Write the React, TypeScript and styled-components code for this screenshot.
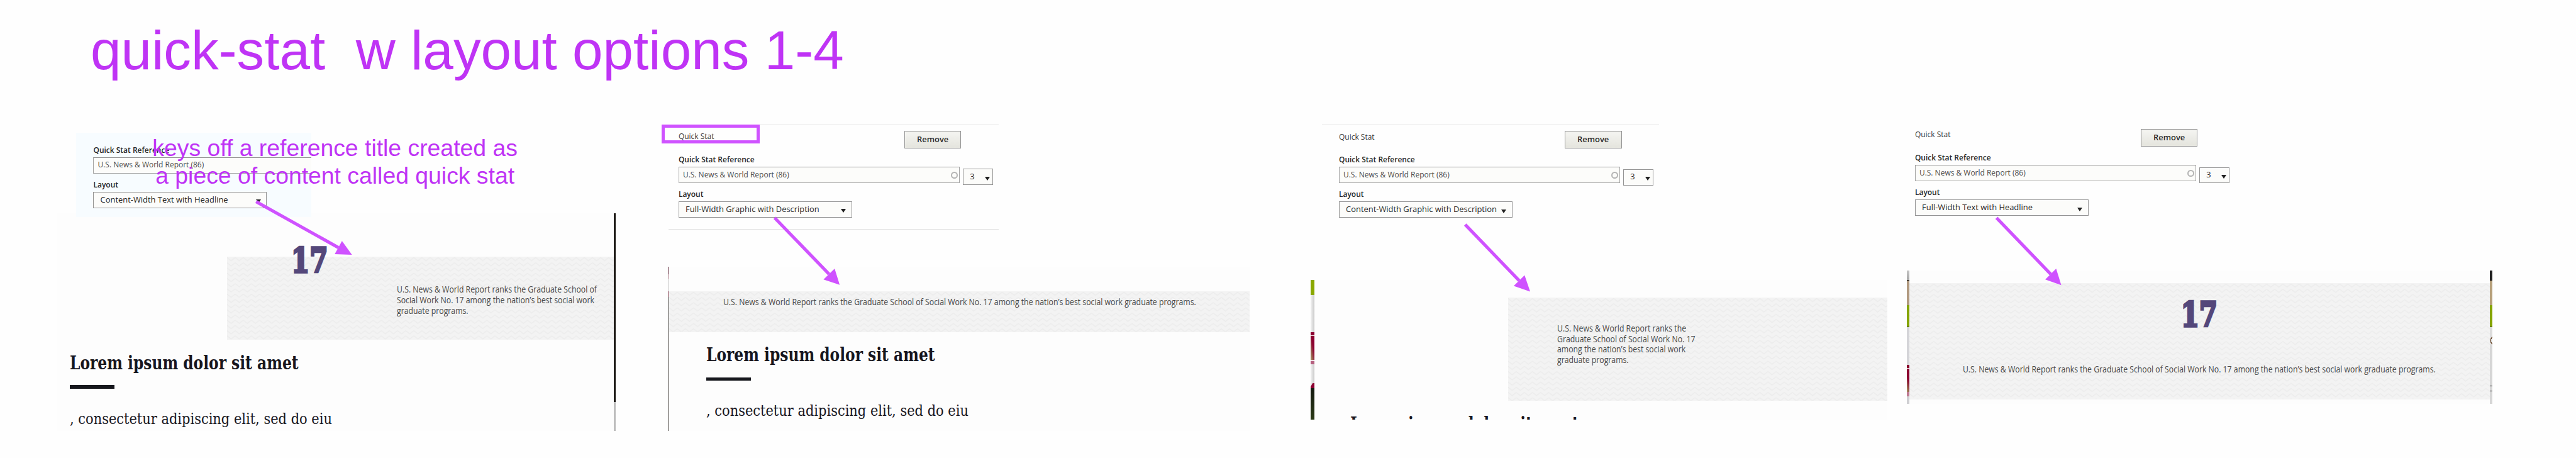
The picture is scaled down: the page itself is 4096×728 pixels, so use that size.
import React, { useId } from "react";
import styled, { createGlobalStyle } from "styled-components";

const GlobalStyle = createGlobalStyle`
  *, *::before, *::after { box-sizing: border-box; }
  html, body { margin: 0; padding: 0; background: #fefefe; overflow: hidden; }
`;

const sans = `"Open Sans", "Noto Sans", sans-serif`;
const slab = `"DejaVu Serif", "Noto Serif", serif`;
const note = `"Liberation Sans", Arial, sans-serif`;
const ink = "#bf33f5";
const marker = "#cf52ff";

/* ---------- board ---------- */

const Window = styled.main`
  width: 100vw;
  height: 100vh;
  overflow: hidden;
  background: #fefefe;
`;

const Board = styled.div`
  position: relative;
  width: 4440px;
  height: 789px;
  overflow: hidden;
  zoom: 0.922315;
`;

/* A clipping pinned somewhere on the board */
const Pinned = styled.div<{ $x: number; $y: number; $w: number; $h?: number }>`
  position: absolute;
  left: ${(p) => p.$x}px;
  top: ${(p) => p.$y}px;
  width: ${(p) => p.$w}px;
  height: ${(p) => (p.$h ? `${p.$h}px` : "auto")};
`;

const Title = styled.h1`
  position: absolute;
  left: 156px;
  top: 31px;
  margin: 0;
  font: 400 94.6px/110px ${note};
  color: ${ink};
  white-space: pre;
`;

const Note = styled.p`
  position: absolute;
  left: 227.5px;
  top: 230.4px;
  width: 700px;
  margin: 0;
  font: 400 40.5px/47.7px ${note};
  color: ${ink};
  text-align: center;
`;

const Highlight = styled.div`
  position: absolute;
  left: 1141px;
  top: 214.3px;
  width: 169px;
  height: 33.4px;
  border: 5.5px solid ${marker};
`;

const Arrows = styled.svg`
  position: absolute;
  inset: 0;
  width: 4440px;
  height: 789px;
  pointer-events: none;
`;

/* ---------- form ---------- */

const Form = styled.div<{ $left: number; $ruled?: "top" | "both" }>`
  display: flex;
  flex-direction: column;
  height: 182px;
  padding: 10.3px 0 0 ${(p) => p.$left}px;
  border-top: 1px solid ${(p) => (p.$ruled ? "#e2e2e2" : "transparent")};
  border-bottom: 1px solid ${(p) => (p.$ruled === "both" ? "#e2e2e2" : "transparent")};
  font: 400 14px/18px ${sans};
  color: #2a2a2a;
`;

const FormCard = styled.div`
  display: flex;
  flex-direction: column;
  height: 145.7px;
  padding: 21.7px 0 0 30px;
  background: #f7fcff;
  font: 400 14px/18px ${sans};
  color: #1c1c1c;
  overflow: hidden;
`;

const FormHead = styled.div`
  display: flex;
  justify-content: space-between;
  align-items: flex-start;
  width: 487.4px;
  height: 30px;
`;

const FormName = styled.span`
  padding-top: 1.2px;
  font-size: 13px;
  color: #3a3a3a;
`;

const Button = styled.button`
  width: 98.2px;
  height: 30px;
  padding: 0 0 2px;
  border: 1px solid #949494;
  border-radius: 0;
  background: linear-gradient(#f5f5f2, #e4e4dd);
  font: 600 14px/18px ${sans};
  color: #2a2a2a;
`;

const Label = styled.label<{ $gap: number }>`
  margin-top: ${(p) => p.$gap}px;
  margin-bottom: 2.8px;
  font-size: 13px;
  font-weight: 600;
  line-height: 18px;
  color: #262626;
`;

const FieldRow = styled.div`
  display: flex;
  align-items: flex-start;
  gap: 5px;
`;

const Input = styled.div<{ $open?: boolean }>`
  display: flex;
  justify-content: space-between;
  align-items: center;
  flex: none;
  width: ${(p) => (p.$open ? "100%" : "485.2px")};
  height: 28px;
  padding: 0 3px 0 6.5px;
  border: 1px solid #a4a4a4;
  border-right-width: ${(p) => (p.$open ? 0 : 1)}px;
  border-top-color: #929292;
  background: #fcfcfa;
  font-size: 13px;
  color: #4a4a4a;
`;

const Throbber = styled.i`
  width: 12px;
  height: 12px;
  margin-top: 1px;
  border: 2.2px solid #b4b4b4;
  border-radius: 50%;
`;

const SelectBox = styled.div<{ $w: number; $right: number; $drop?: number }>`
  display: flex;
  justify-content: space-between;
  align-items: flex-start;
  flex: none;
  width: ${(p) => p.$w}px;
  height: 28px;
  margin-top: ${(p) => p.$drop ?? 0}px;
  padding: 2.7px ${(p) => p.$right}px 0 11px;
  border: 1px solid #949494;
  background: #fcfcfa;
  white-space: nowrap;
`;

const Caret = styled.i`
  margin-top: 9.5px;
  border: 4.4px solid transparent;
  border-top: 6.6px solid #222;
  border-bottom: 0;
`;

function Select(props: { value: string; width: number; right: number; drop?: number }) {
  return (
    <SelectBox $w={props.width} $right={props.right} $drop={props.drop}>
      <span>{props.value}</span>
      <Caret />
    </SelectBox>
  );
}

function QuickStatForm(props: { layout: string; left: number; ruled?: "top" | "both" }) {
  return (
    <Form $left={props.left} $ruled={props.ruled}>
      <FormHead>
        <FormName>Quick Stat</FormName>
        <Button>Remove</Button>
      </FormHead>
      <Label $gap={10.9}>Quick Stat Reference</Label>
      <FieldRow>
        <Input>
          <span>U.S. News &amp; World Report (86)</span>
          <Throbber />
        </Input>
        <Select value="3" width={52} right={4.2} drop={3.7} />
      </FieldRow>
      <Label $gap={7.3}>Layout</Label>
      <Select value={props.layout} width={299.2} right={9.6} />
    </Form>
  );
}

/* ---------- page clippings ---------- */

const Shot = styled.div`
  display: flex;
  height: 100%;
  background: #fdfdfd;
  overflow: hidden;
`;

const Page = styled.div<{ $top: number }>`
  flex: 1;
  min-width: 0;
  padding-top: ${(p) => p.$top}px;
`;

const Edge = styled.div<{ $w: number }>`
  display: flex;
  flex-direction: column;
  flex: none;
  width: ${(p) => p.$w}px;
`;

const EdgePart = styled.div<{ $h: number; $fill: string }>`
  flex: none;
  height: ${(p) => p.$h}px;
  background: ${(p) => p.$fill};
`;

function PageEdge({ width, parts }: { width: number; parts: [number, string][] }) {
  return (
    <Edge $w={width}>
      {parts.map(([h, fill], i) => (
        <EdgePart key={i} $h={h} $fill={fill} />
      ))}
    </Edge>
  );
}

const BandBox = styled.section<{ $h: number; $indent?: number; $padX?: number; $padTop: number; $center?: boolean }>`
  position: relative;
  display: flex;
  flex-direction: column;
  align-items: ${(p) => (p.$center ? "center" : "flex-start")};
  height: ${(p) => p.$h}px;
  margin-left: ${(p) => p.$indent ?? 0}px;
  padding: ${(p) => p.$padTop}px 0 0 ${(p) => p.$padX ?? 0}px;
  background: #f3f3f3;
`;

const Weave = styled.svg`
  position: absolute;
  inset: 0;
  width: 100%;
  height: 100%;
`;

type BandProps = {
  height: number;
  indent?: number;
  padX?: number;
  padTop: number;
  center?: boolean;
  children: React.ReactNode;
};

function Band({ height, indent, padX, padTop, center, children }: BandProps) {
  const id = useId();
  return (
    <BandBox $h={height} $indent={indent} $padX={padX} $padTop={padTop} $center={center}>
      <Weave aria-hidden>
        <defs>
          <pattern id={id} width="14" height="9" patternUnits="userSpaceOnUse">
            <path d="M-1 2.5 L0 1.5 L7 7 L14 1.5 L15 2.5" fill="none" stroke="#ececec" strokeWidth="1.6" />
          </pattern>
        </defs>
        <rect width="100%" height="100%" fill={`url(#${id})`} />
      </Weave>
      {children}
    </BandBox>
  );
}

const Description = styled.p<{ $center?: boolean }>`
  position: relative;
  margin: 0;
  font: 400 15px/18px ${sans};
  color: #484848;
  white-space: pre;
  transform: scaleX(0.887);
  transform-origin: ${(p) => (p.$center ? "center" : "left")} top;
`;

const Figure = styled.strong`
  position: relative;
  margin-bottom: 55.6px;
  font: 700 59px/60px ${slab};
  color: #54477a;
  -webkit-text-stroke: 4px #54477a;
  transform: scaleX(0.77);
`;

const RaisedFigure = styled(Figure)`
  position: absolute;
  left: 111px;
  top: -22px;
  margin: 0;
  transform-origin: left top;
`;

const Article = styled.article<{ $left: number }>`
  padding: 20.4px 0 0 ${(p) => p.$left}px;
  color: #17161e;
  white-space: pre;
`;

const Headline = styled.h2`
  margin: 0;
  font: 700 32px/40px ${slab};
  transform: scaleX(0.792);
  transform-origin: left top;
`;

const Rule = styled.div`
  width: 77px;
  height: 5.8px;
  margin: 17.7px 0 37.3px;
  background: #16171d;
`;

const Body = styled.p`
  margin: 0;
  font: 400 26px/32px ${slab};
  transform: scaleX(0.874);
  transform-origin: left top;
`;

function Lorem({ left }: { left: number }) {
  return (
    <Article $left={left}>
      <Headline>Lorem ipsum dolor sit amet</Headline>
      <Rule />
      <Body>, consectetur adipiscing elit, sed do eiu</Body>
    </Article>
  );
}

const ranking =
  "U.S. News & World Report ranks the Graduate School of Social Work No. 17 among the nation’s best social work graduate programs.";

/* ---------- arrows: tail, tip and the two back corners of the head ---------- */

type Point = [number, number];
const arrows: [Point, Point, Point, Point][] = [
  [[441.5, 347.5], [606.8, 439], [589.6, 415.3], [577, 437.9]],
  [[1335.5, 375.5], [1447.6, 491], [1438.9, 463], [1419.7, 481.8]],
  [[2526, 387], [2638, 502.5], [2628.4, 474.3], [2609.6, 492.9]],
  [[3442, 375.5], [3553.6, 491.3], [3544.8, 463], [3526, 481.8]],
];

export default function App() {
  return (
    <Window>
      <GlobalStyle />
      <Board>
        <Title>{"quick-stat  w layout options 1-4"}</Title>

        {/* 1: content-width text with headline */}
        <Pinned $x={98} $y={368} $w={963} $h={375}>
          <Shot>
            <Page $top={74}>
              <Band height={143.7} indent={293} padX={293.2} padTop={48.5}>
                <RaisedFigure>17</RaisedFigure>
                <Description>
                  {"U.S. News & World Report ranks the Graduate School of\nSocial Work No. 17 among the nation’s best social work\ngraduate programs."}
                </Description>
              </Band>
              <Lorem left={22} />
            </Page>
            <PageEdge width={3.2} parts={[[325, "#1e1b17"], [50, "#bdbdbd"]]} />
          </Shot>
        </Pinned>
        <Pinned $x={131} $y={228.3} $w={406}>
          <FormCard>
            <Label $gap={0}>Quick Stat Reference</Label>
            <Input $open>
              <span>U.S. News &amp; World Report (86)</span>
            </Input>
            <Label $gap={11.2}>Layout</Label>
            <Select value="Content-Width Text with Headline" width={298.6} right={9} />
          </FormCard>
        </Pinned>
        <Note>
          keys off a reference title created as
          <br />a piece of content called quick stat
        </Note>

        {/* 2: full-width graphic with description */}
        <Pinned $x={1152.8} $y={214.2} $w={569.2}>
          <QuickStatForm layout="Full-Width Graphic with Description" left={17} ruled="both" />
        </Pinned>
        <Highlight />
        <Pinned $x={1152.6} $y={460} $w={1001.6} $h={283}>
          <Shot>
            <PageEdge
              width={1.1}
              parts={[[13, "#4a0f22"], [7, "#a06a78"], [22, "#bdbdbd"], [10, "#6d1c30"], [231, "#2e2b27"]]}
            />
            <Page $top={42}>
              <Band height={70} padTop={10.2} center>
                <Description $center>{ranking}</Description>
              </Band>
              <Lorem left={63.6} />
            </Page>
          </Shot>
        </Pinned>

        {/* 3: content-width graphic with description */}
        <Pinned $x={2278.8} $y={214.6} $w={581.6}>
          <QuickStatForm layout="Content-Width Graphic with Description" left={29.5} ruled="top" />
        </Pinned>
        <Pinned $x={2260} $y={482} $w={993.6} $h={241}>
          <Shot>
            <PageEdge
              width={6}
              parts={[
                [26, "#8aa800"],
                [1, "#5b6e10"],
                [64, "linear-gradient(90deg, #f2f2f2, #c9c9c9)"],
                [5, "#8c0030"],
                [1.5, "#f4e8ec"],
                [40.5, "linear-gradient(80deg, #a08a5c 10%, #8c0030 60%)"],
                [2, "#eedfe4"],
                [6, "#b5607f"],
                [32, "linear-gradient(90deg, #f2f2f2, #c9c9c9)"],
                [9, "linear-gradient(120deg, #e4e4e4 25%, #8c0030 35%)"],
                [54, "linear-gradient(#141a10, #2b3a16)"],
              ]}
            />
            <Page $top={31}>
              <Band height={177.7} indent={333.5} padX={85.2} padTop={44.2}>
                <Description>
                  {"U.S. News & World Report ranks the\nGraduate School of Social Work No. 17\namong the nation’s best social work\ngraduate programs."}
                </Description>
              </Band>
              <Article $left={62}>
                <Headline>Lorem ipsum dolor sit amet</Headline>
              </Article>
            </Page>
          </Shot>
        </Pinned>

        {/* 4: full-width text with headline */}
        <Pinned $x={3284.4} $y={211.2} $w={569.2}>
          <QuickStatForm layout="Full-Width Text with Headline" left={17} />
        </Pinned>
        <Pinned $x={3287} $y={466} $w={1010.2} $h={230}>
          <Shot>
            <PageEdge
              width={4.2}
              parts={[
                [16, "linear-gradient(#c4c4c4, #a8a8a8)"],
                [1.2, "#111"],
                [42.8, "#b19a80"],
                [37, "#86a500"],
                [1, "#4f6210"],
                [65, "#d4d4d8"],
                [5, "#8c0030"],
                [1.5, "#f4e8ec"],
                [40.5, "linear-gradient(75deg, #a08a5c 10%, #8c0030 55%)"],
                [7, "#c07a92"],
                [13, "#cfcfd2"],
              ]}
            />
            <Page $top={22}>
              <Band height={200} padTop={24.6} center>
                <Figure>17</Figure>
                <Description $center>{ranking}</Description>
              </Band>
            </Page>
            <PageEdge
              width={4.8}
              parts={[
                [16, "#232323"],
                [1.2, "#111"],
                [42.8, "#b7a17c"],
                [37, "#86a500"],
                [1, "#4f6210"],
                [15, "#dcdcdc"],
                [16, "radial-gradient(circle at 9px 8px, #dcdcdc 6.6px, #6b4a2c 7px, #6b4a2c 8px, #dcdcdc 8.6px)"],
                [70, "#d6d6d6"],
                [1, "#333"],
                [7, "#d6d6d6"],
                [1, "#333"],
                [22, "#d6d6d6"],
              ]}
            />
          </Shot>
        </Pinned>

        <Arrows viewBox="0 0 4440 789" aria-hidden>
          {arrows.map(([tail, tip, a, b], i) => (
            <g key={i} fill={marker} stroke={marker}>
              <line
                x1={tail[0]}
                y1={tail[1]}
                x2={(a[0] + b[0]) / 2}
                y2={(a[1] + b[1]) / 2}
                strokeWidth="5.6"
              />
              <polygon points={`${tip} ${a} ${b}`} stroke="none" />
            </g>
          ))}
        </Arrows>
      </Board>
    </Window>
  );
}
